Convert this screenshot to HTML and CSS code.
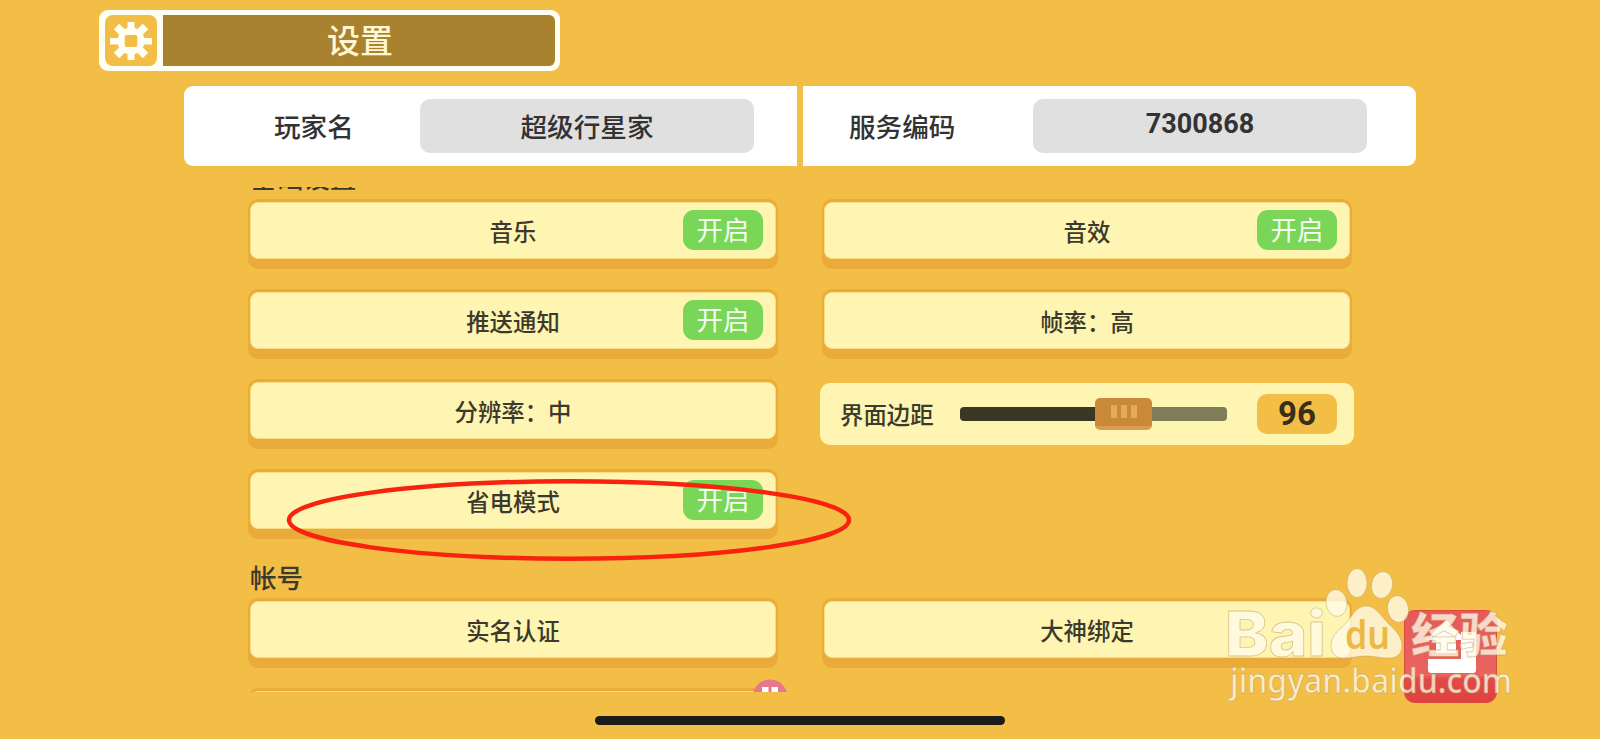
FILE: index.html
```html
<!DOCTYPE html>
<html lang="zh-CN">
<head>
<meta charset="utf-8">
<title>设置</title>
<link rel="stylesheet" href="styles.css">
</head>
<body>
<main class="screen">
  <header class="title-bar">
    <span class="title-icon">
      <svg width="42" height="40" viewBox="-21 -20 42 40">
        <g fill="#fffef5">
          <rect x="-3.500" y="-19" width="7" height="38"/>
          <rect x="-21" y="-3" width="42" height="6.500"/>
          <rect x="-3.800" y="-20.500" width="7.600" height="41" transform="rotate(45)"/>
          <rect x="-3.800" y="-20.500" width="7.600" height="41" transform="rotate(-45)"/>
          <circle r="13.500"/>
        </g>
        <rect x="-6.300" y="-6" width="12.600" height="12" rx="2" fill="#f2bd45"/>
      </svg>
    </span>
    <h1 class="title-text">设置</h1>
  </header>

  <section class="profile">
    <div class="profile-cell profile-name">
      <span class="profile-label">玩家名</span>
      <span class="profile-value">超级行星家</span>
    </div>
    <div class="profile-cell profile-code">
      <span class="profile-label">服务编码</span>
      <span class="profile-value digits">7300868</span>
    </div>
  </section>

  <section class="settings">
    <h2 class="group-title group-basic">基础设置</h2>
    <div class="grid">
      <div class="option"><span class="face">音乐<b class="switch">开启</b></span></div>
      <div class="option"><span class="face">音效<b class="switch">开启</b></span></div>
      <div class="option"><span class="face">推送通知<b class="switch">开启</b></span></div>
      <div class="option"><span class="face">帧率：高</span></div>
      <div class="option"><span class="face">分辨率：中</span></div>
      <div class="slider">
        <span class="slider-label">界面边距</span>
        <span class="track"><span class="thumb"><i></i><i></i><i></i></span></span>
        <span class="slider-value">96</span>
      </div>
      <div class="option"><span class="face">省电模式<b class="switch">开启</b></span></div>
    </div>
    <h2 class="group-title group-account">帐号</h2>
    <div class="grid">
      <div class="option"><span class="face">实名认证</span></div>
      <div class="option"><span class="face">大神绑定</span></div>
      <div class="option next"><span class="face"></span>
        <svg class="gift" width="36" height="36" viewBox="0 0 36 36"><circle cx="18" cy="18" r="17.500" fill="#e6788c"/><path d="M10 8h6.500v7H10zM19.500 8H26v7h-6.500z" fill="#fff"/></svg>
      </div>
    </div>
  </section>
  <div class="home-bar"></div>

  <svg class="marker" width="568" height="86" viewBox="0 0 568 86">
    <ellipse cx="284" cy="43" rx="280" ry="38.700" fill="none" stroke="#f7230e" stroke-width="4.500"/>
  </svg>

  <svg class="corner" width="300" height="150" viewBox="1225 565 300 150">
    <defs>
      <linearGradient id="red" x1="0" y1="0" x2="0" y2="1">
        <stop offset="0" stop-color="#e6595a"/><stop offset=".7" stop-color="#e9645f"/><stop offset=".75" stop-color="#e04a48"/><stop offset="1" stop-color="#df4240"/>
      </linearGradient>
    </defs>
    <rect x="1404.500" y="610.500" width="92" height="92" rx="10" fill="url(#red)" stroke="#dc4b3d"/>
    <path d="M1446 620l20 20h-10v13h-20v-13h-10z" fill="#fff"/>
    <path d="M1428 659h33v-27h15v38q0 3-3 3h-42q-3 0-3-3z" fill="#fff"/>
    <g class="mark">
      <text class="bai" x="1225" y="656" textLength="101" lengthAdjust="spacingAndGlyphs">Bai</text>
      <ellipse cx="1336.500" cy="603" rx="10.500" ry="13.500" transform="rotate(-8 1336.500 603)"/>
      <ellipse cx="1357" cy="583" rx="10" ry="14.500"/>
      <ellipse cx="1382" cy="585" rx="10.500" ry="13.500" transform="rotate(12 1382 585)"/>
      <ellipse cx="1398" cy="609" rx="10.500" ry="13.500" transform="rotate(-10 1398 609)"/>
      <path d="M1366 606c-9 0-13 8-18 15-7 8-17 13-17 25 0 8 6 13 14 12 8 0 13-2 21-2s14 2 21 2c9 1 15-4 15-12 0-12-9-17-16-25-6-7-11-15-20-15z"/>
      <text class="jingyan" x="1411" y="652" textLength="97" lengthAdjust="spacingAndGlyphs">经验</text>
      <text class="domain" x="1230" y="693" textLength="282" lengthAdjust="spacingAndGlyphs">jingyan.baidu.com</text>
    </g>
    <text class="du" x="1345" y="649" textLength="45" lengthAdjust="spacingAndGlyphs">du</text>
  </svg>
</main>
</body>
</html>
```
FILE: styles.css
```css
* { box-sizing: border-box; }

body {
  margin: 0;
  background: #f3be46;
  color: #3c3a2c;
  font-family: "Noto Sans CJK SC", sans-serif;
  font-weight: 500;
}

h1, h2 { margin: 0; font-weight: 500; }

.screen {
  position: relative;
  width: 1600px;
  height: 739px;
  overflow: hidden;
  padding-top: 10px;
}

.title-bar {
  display: flex;
  gap: 6px;
  width: 461px;
  height: 61px;
  margin-left: 99px;
  padding: 5px 5px 5px 6px;
  border-radius: 9px;
  background: #fffef5;
}

.title-icon {
  display: flex;
  align-items: center;
  justify-content: center;
  width: 52px;
  border-radius: 8px;
  background: #f3be46;
}

.title-text {
  flex: 1;
  border-radius: 0 6px 6px 0;
  background: #a8822f;
  color: #fff6d2;
  font-size: 33px;
  line-height: 48px;
  padding-left: 2px;
  text-align: center;
}

.profile {
  display: flex;
  gap: 6px;
  width: 1232px;
  height: 80px;
  margin: 15px 0 0 184px;
}

.profile-cell {
  display: flex;
  align-items: center;
  width: 613px;
  background: #fff;
}

.profile-name { border-radius: 9px 0 0 9px; padding-left: 90px; }
.profile-code { border-radius: 0 9px 9px 0; padding-left: 46px; }

.profile-label {
  width: 146px;
  color: #333;
  font-size: 26.600px;
  line-height: 54px;
}

.profile-code .profile-label { width: 184px; }

.profile-value {
  width: 334px;
  height: 54px;
  border-radius: 10px;
  background: #e0e0e0;
  color: #333;
  font-size: 26.600px;
  line-height: 53px;
  text-align: center;
}

.digits {
  font-family: Roboto, sans-serif;
  font-size: 27px;
  font-weight: 700;
  line-height: 50px;
}

.settings {
  width: 1110px;
  height: 505px;
  margin: 21px 0 0 248px;
  overflow: hidden;
}

.group-title { padding-left: 2px; font-size: 26.600px; }
.group-basic { height: 40px; margin-top: -27px; line-height: 33px; }
.group-account { height: 59px; line-height: 40px; padding-top: 17px; }

.grid {
  display: grid;
  grid-template-columns: 530px 530px;
  column-gap: 44px;
  grid-auto-rows: 70px;
  row-gap: 20px;
}

.option {
  height: 70px;
  margin-top: -1px;
  padding: 3px 2px 11px;
  border-radius: 10px;
  background: #eaab3b;
}

.face {
  display: flex;
  position: relative;
  align-items: center;
  justify-content: center;
  height: 57px;
  border: 1px solid #f9dc82;
  border-radius: 8px;
  background: #fef5b2;
  font-size: 23.400px;
  line-height: 54px;
}

.switch {
  position: absolute;
  top: 7px;
  right: 12px;
  width: 80px;
  height: 40px;
  border-radius: 11px;
  background: #7ad656;
  color: #f5fff0;
  font-size: 26.400px;
  font-weight: 400;
  line-height: 37px;
  text-align: center;
}

.slider {
  display: flex;
  align-items: center;
  width: 534px;
  height: 62px;
  margin: 3px 0 0 -2px;
  padding-left: 20px;
  border-radius: 10px;
  background: #fef5b2;
}

.slider-label { width: 120px; font-size: 23.400px; line-height: 60px; }

.track {
  width: 267px;
  height: 14px;
  padding-left: 135px;
  border-radius: 4px;
  background: linear-gradient(90deg, #3b3725 150px, #7f7c58 150px);
}

.thumb {
  display: flex;
  gap: 4px;
  justify-content: center;
  width: 57px;
  height: 32px;
  margin-top: -9px;
  padding-top: 7px;
  border-bottom: 4px solid #dc9c50;
  border-radius: 5px;
  background: #c88a39;
}

.thumb i { width: 6px; height: 13px; background: #e4ab57; }

.slider-value {
  width: 80px;
  height: 40px;
  margin-left: 30px;
  border-radius: 10px;
  background: #f3be46;
  color: #3a2d1c;
  font: 700 33px/40px Roboto, sans-serif;
  text-align: center;
}

.next { position: relative; }

.gift {
  position: absolute;
  top: -9px;
  left: 504px;
}

.home-bar {
  width: 410px;
  height: 9px;
  margin: 24px 0 0 595px;
  border-radius: 5px;
  background: #1d1b17;
}

.marker { position: absolute; left: 285px; top: 477px; }
.corner { position: absolute; left: 1225px; top: 565px; }

.mark {
  fill: #fffbe9;
  fill-opacity: .8;
  stroke: #b9924d;
  stroke-opacity: .5;
  stroke-width: .8;
}

.bai { font: 800 62px Inter, sans-serif; }
.jingyan { font: 900 47px "Noto Sans CJK SC", sans-serif; }
.domain { font: 500 34px "Noto Sans", sans-serif; }
.du { font: 600 40px "Noto Sans", sans-serif; fill: #ecb944; }
```
